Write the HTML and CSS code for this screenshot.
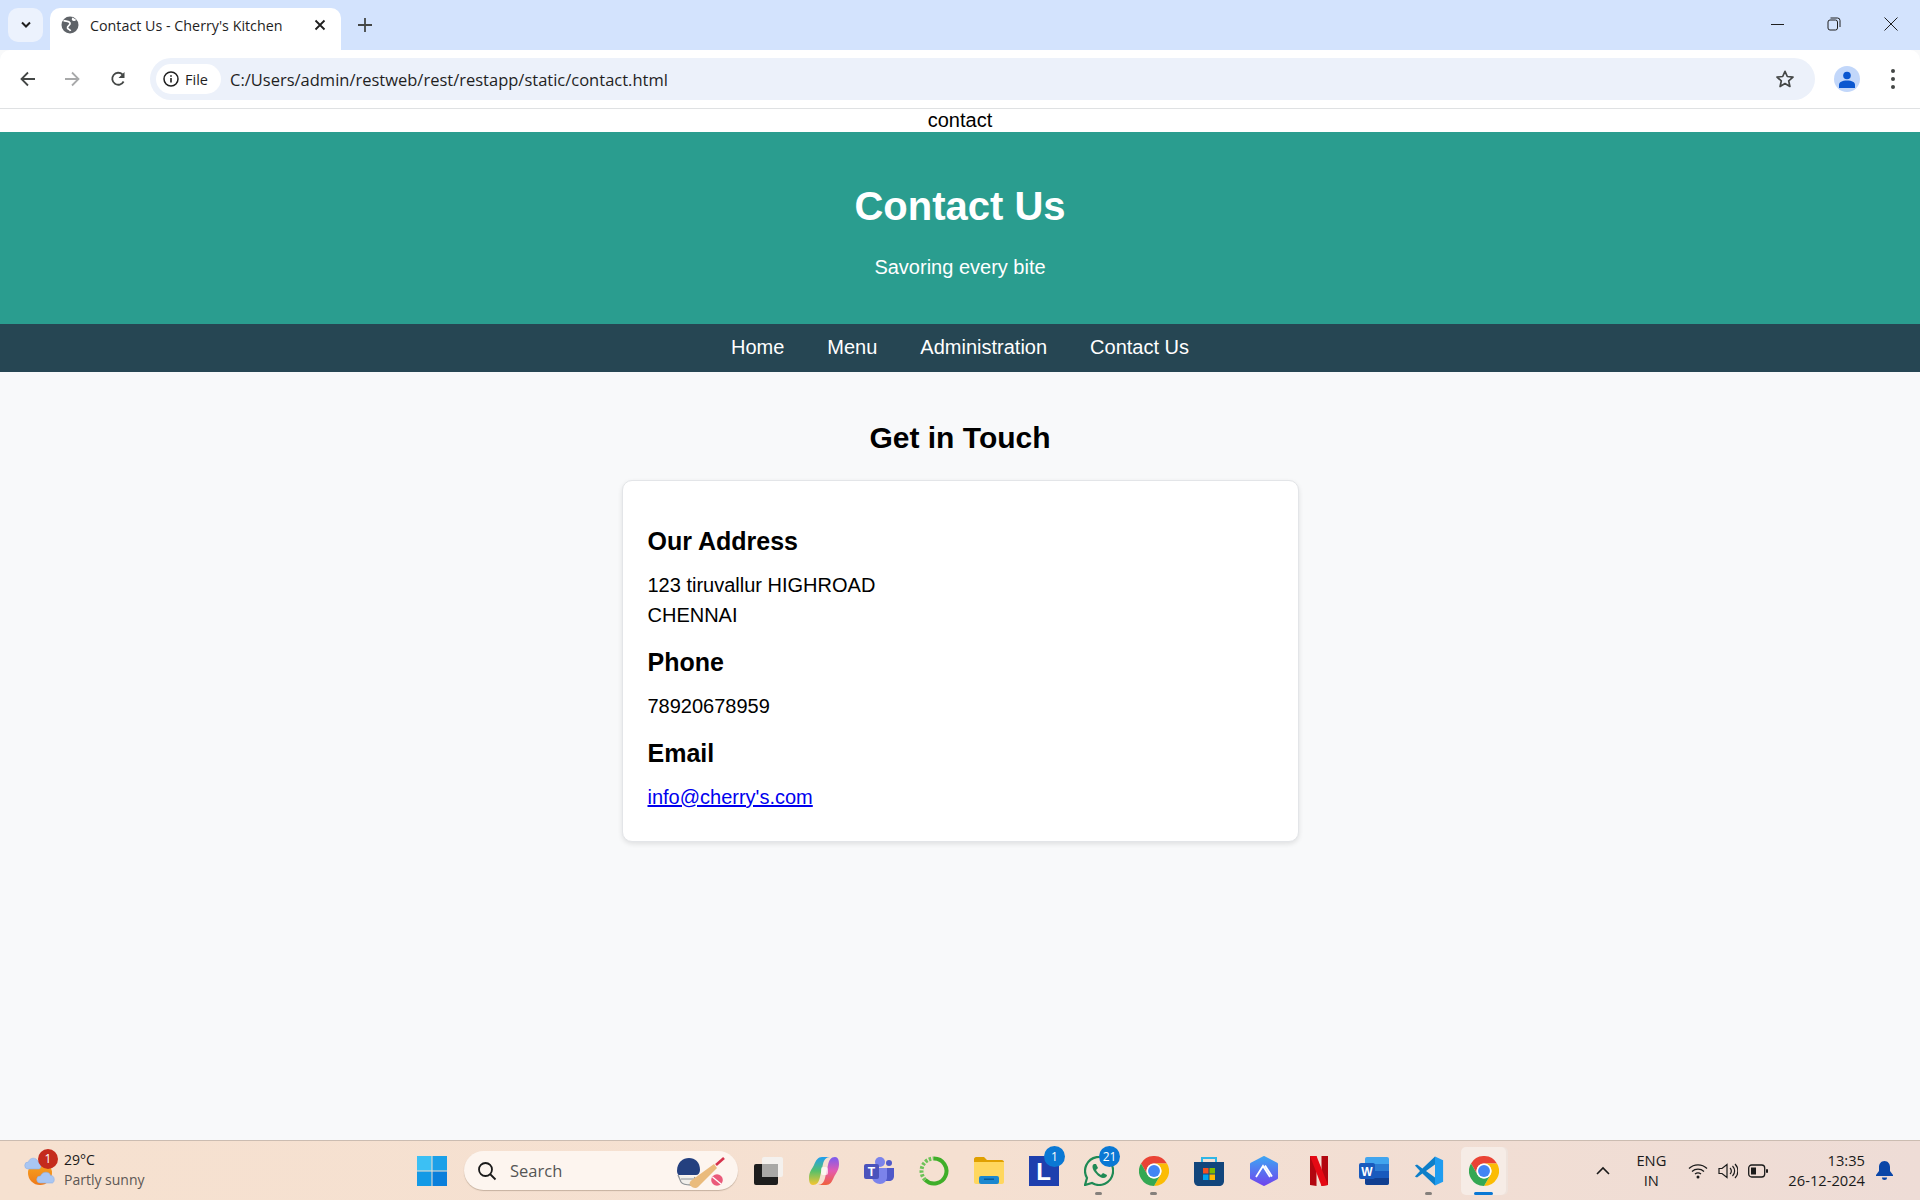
FILE: index.html
```html
<!DOCTYPE html>
<html lang="en">
<head>
    <meta charset="UTF-8">
    <title>Contact Us - Cherry's Kitchen</title>
    <link rel="stylesheet" href="styles.css">
</head>
<body>
    <svg class="defs" width="0" height="0">
        <defs>
            <linearGradient id="sun" x1="0" y1="0" x2="0" y2="1"><stop offset="0" stop-color="#f9a81e"/><stop offset="1" stop-color="#ee7a1a"/></linearGradient>
            <linearGradient id="cop-a" x1="0" y1="0" x2="0" y2="1"><stop offset="0" stop-color="#1f9ef0"/><stop offset=".5" stop-color="#57c06a"/><stop offset="1" stop-color="#f7c530"/></linearGradient>
            <linearGradient id="cop-b" x1="0" y1="0" x2="0" y2="1"><stop offset="0" stop-color="#7a5cf0"/><stop offset=".5" stop-color="#e35bb0"/><stop offset="1" stop-color="#f0603a"/></linearGradient>
            <linearGradient id="hex" x1="0" y1="0" x2="0" y2="1"><stop offset="0" stop-color="#3fa2f3"/><stop offset="1" stop-color="#6e48ee"/></linearGradient>
        </defs>
        <symbol id="chrome" viewBox="0 0 48 48">
            <path fill="#ea4335" d="M24 12H44.8A24 24 0 0 0 3.2 12L13.6 30A12 12 0 0 1 24 12Z"/>
            <path fill="#fbbc04" d="M44.8 12A24 24 0 0 1 24 48L34.4 30A12 12 0 0 0 24 12Z"/>
            <path fill="#34a853" d="M24 48A24 24 0 0 1 3.2 12L13.6 30A12 12 0 0 0 34.4 30Z"/>
            <circle cx="24" cy="24" r="12" fill="#fff"/>
            <circle cx="24" cy="24" r="9.5" fill="#4285f4"/>
        </symbol>
    </svg>

    <!-- browser frame -->
    <div class="tabstrip">
        <div class="tab-search">
            <svg width="12" height="8" viewBox="0 0 12 8"><path d="M2 1.5l4 4 4-4" fill="none" stroke="#1f1f1f" stroke-width="2"/></svg>
        </div>
        <div class="tab">
            <svg class="favicon" width="18" height="18" viewBox="0 0 18 18"><circle cx="9" cy="9" r="8.5" fill="#5f6368"/><path d="M2.500 4.500c2.500 1 5.500.5 6.500 2.500s-3 2.500-2.500 5c.3 1.500 2.500 1 3 3" fill="none" stroke="#fff" stroke-width="1.700"/><path d="M11.500 1.500c-1.500 2-.5 3.500 2 3.500l2-1z" fill="#fff"/></svg>
            <span class="tab-title">Contact Us - Cherry's Kitchen</span>
            <svg class="tab-close" width="12" height="12" viewBox="0 0 12 12"><path d="M1.5 1.5l9 9M10.5 1.5l-9 9" stroke="#1f1f1f" stroke-width="1.8"/></svg>
        </div>
        <svg class="new-tab" width="14" height="14" viewBox="0 0 14 14"><path d="M7 0v14M0 7h14" stroke="#444746" stroke-width="1.8"/></svg>
        <div class="window-btns">
            <svg width="14" height="14" viewBox="0 0 14 14"><path d="M1 7.500h13" stroke="#1f1f1f" stroke-width="1"/></svg>
            <svg width="14" height="14" viewBox="0 0 14 14"><rect x="1" y="3" width="9.500" height="10" rx="2" fill="none" stroke="#1f1f1f"/><path d="M3.500 1h7a2.500 2.500 0 0 1 2.500 2.500v6.500" fill="none" stroke="#1f1f1f"/></svg>
            <svg width="14" height="14" viewBox="0 0 14 14"><path d="M.5.5l13 13M13.500.5l-13 13" stroke="#1f1f1f" stroke-width="1"/></svg>
        </div>
    </div>
    <div class="toolbar">
        <div class="nav-btns">
            <svg width="16" height="16" viewBox="0 0 16 16"><path d="M15 8H2M8 1.500L1.500 8 8 14.500" fill="none" stroke="#444746" stroke-width="1.800"/></svg>
            <svg width="16" height="16" viewBox="0 0 16 16"><path d="M1 8h13M8 1.500L14.500 8 8 14.500" fill="none" stroke="#a8a9aa" stroke-width="1.800"/></svg>
            <svg width="16" height="16" viewBox="0 0 16 16"><path d="M13.600 10.500A6 6 0 1 1 12.500 3.500" fill="none" stroke="#444746" stroke-width="1.800"/><path d="M14.500 1v6h-6z" fill="#444746"/></svg>
        </div>
        <div class="omnibox">
            <div class="chip">
                <svg width="16" height="16" viewBox="0 0 16 16"><circle cx="8" cy="8" r="7" fill="none" stroke="#1f1f1f" stroke-width="1.500"/><path d="M8 7v4.500M8 4.200v1.600" stroke="#1f1f1f" stroke-width="1.600"/></svg>
                <span>File</span>
            </div>
            <span class="url">C:/Users/admin/restweb/rest/restapp/static/contact.html</span>
            <svg class="star" width="20" height="20" viewBox="0 0 20 20"><path d="M10 2.300l2.300 5.200 5.700.6-4.300 3.800 1.200 5.600-4.900-2.900-4.900 2.900 1.200-5.600L2 8.100l5.700-.6z" fill="none" stroke="#444746" stroke-width="1.700" stroke-linejoin="round"/></svg>
        </div>
        <div class="avatar">
            <svg width="16" height="17" viewBox="0 0 16 17"><circle cx="8" cy="4.500" r="3.800" fill="#0b57d0"/><path d="M0 17v-3c0-3 3-4.500 8-4.500s8 1.500 8 4.500v3z" fill="#0b57d0"/></svg>
        </div>
        <div class="dots"><i></i><i></i><i></i></div>
    </div>

    <!-- the page itself -->
    <div class="page">
        <div class="page-label">contact</div>
        <header class="site-header">
            <h1>Contact Us</h1>
            <p>Savoring every bite</p>
        </header>
        <nav class="site-nav">
            <a href="#">Home</a>
            <a href="#">Menu</a>
            <a href="#">Administration</a>
            <a href="#">Contact Us</a>
        </nav>
        <main class="content">
            <h2>Get in Touch</h2>
            <section class="card">
                <h3>Our Address</h3>
                <p>123 tiruvallur HIGHROAD<br>CHENNAI</p>
                <h3>Phone</h3>
                <p>78920678959</p>
                <h3>Email</h3>
                <p><a href="#">info@cherry's.com</a></p>
            </section>
        </main>
    </div>

    <!-- windows taskbar -->
    <footer class="taskbar">
        <div class="weather">
            <div class="weather-icon">
                <svg width="32" height="32" viewBox="0 0 32 32">
                    <circle cx="16" cy="18" r="12" fill="url(#sun)"/>
                    <path d="M4 14a3.500 3.500 0 0 1 .500-7c1-5 8-5 9.500-.5 3-.500 4.500 5 1.500 7.500z" fill="#a9c6f2" stroke="#8fb0e6" stroke-width=".6"/>
                    <path d="M16 28a3.500 3.500 0 0 1 .500-7c1.500-5 9-5 10-.5 4-.500 5 6 2 7.500z" fill="#a9c6f2" stroke="#8fb0e6" stroke-width=".6"/>
                </svg>
                <span class="weather-badge">1</span>
            </div>
            <div class="weather-text">
                <span class="temp">29°C</span>
                <span class="cond">Partly sunny</span>
            </div>
        </div>
        <div class="slot">
            <svg width="30" height="30" viewBox="0 0 30 30">
                <rect width="14.500" height="14.500" fill="#3cc0f4"/>
                <rect x="15.500" width="14.500" height="14.500" fill="#1ba0e8"/>
                <rect y="15.500" width="14.500" height="14.500" fill="#139ae6"/>
                <rect x="15.500" y="15.500" width="14.500" height="14.500" fill="#0a7fdb"/>
            </svg>
        </div>
        <div class="search">
            <svg width="20" height="20" viewBox="0 0 20 20"><circle cx="8.500" cy="8.500" r="6.500" fill="none" stroke="#1a1a1a" stroke-width="1.800"/><path d="M13 13l5.500 5.500" stroke="#1a1a1a" stroke-width="1.800"/></svg>
            <span>Search</span>
            <svg class="search-art" width="52" height="36" viewBox="0 0 52 36">
                <path d="M3 22l3 7c2 3 6 3 10 3l4-8" fill="#f1efeb" stroke="#8f9498" stroke-width="1.300"/>
                <path d="M4 21l15 0M6 26l12 0" stroke="#8f9498" stroke-width="1"/>
                <path d="M2 18C2 9 8 5 14 5s11 4 11 12c0 3-2 5-4 5l-17 0c-1 0-2-2-2-4z" fill="#24407f"/>
                <path d="M15 32c-1-2 0-4 2-5l22-16 3 4-19 19c-2 2-6 1-8-2z" fill="#eabb7c"/>
                <path d="M41 12l8-7" stroke="#d6324c" stroke-width="2.600"/>
                <circle cx="42" cy="27" r="5.800" fill="#ea5a7a"/>
                <path d="M37.500 24l8.500 7" stroke="#fff" stroke-width="1.300"/>
            </svg>
        </div>

        <div class="app-slots">
            <div class="slot">
                <svg width="30" height="28" viewBox="0 0 30 28"><rect y="7" width="24" height="21" rx="2" fill="#1d1d1d"/><rect x="8" width="21" height="20" rx="2" fill="#f4f1ee"/><rect x="8" y="7" width="16" height="13" fill="#a9a8a6"/></svg>
            </div>
            <div class="slot">
                <svg width="30" height="28" viewBox="0 0 30 28"><path d="M13 0H21C17 0 15 3 14 7L11 20C10 25 8 28 4 28 1 28 0 25 0 21 0 15 3 12 5 8 7 3 9 0 13 0Z" fill="url(#cop-a)"/><path d="M17 28H9C13 28 15 25 16 21L19 8C20 3 22 0 26 0 29 0 30 3 30 7 30 13 27 16 25 20 23 25 21 28 17 28Z" fill="url(#cop-b)"/><rect x="12" y="10" width="7" height="8" rx="2" fill="#fff" opacity=".7"/></svg>
            </div>
            <div class="slot">
                <svg width="30" height="27" viewBox="0 0 30 27"><circle cx="16" cy="5" r="5" fill="#7b83eb"/><circle cx="25" cy="6" r="3" fill="#5059c9"/><path d="M21 11h9v8c0 3-2 5-5 5h-4z" fill="#5059c9"/><path d="M8 11h15v9c0 4-3 7-7 7s-8-3-8-7z" fill="#7b83eb"/><rect y="7" width="15" height="15" rx="2" fill="#4b53bc"/><text x="7.500" y="19" class="svg-letter" font-size="12" text-anchor="middle">T</text></svg>
            </div>
            <div class="slot">
                <svg width="30" height="30" viewBox="0 0 30 30"><path d="M15 2.500A12.500 12.500 0 1 1 6.200 23.900" fill="none" stroke="#3fae29" stroke-width="4"/><path d="M6.200 23.900A12.500 12.500 0 0 1 15 2.500" fill="none" stroke="#6cc257" stroke-width="4" stroke-dasharray="2.500 1.500"/></svg>
            </div>
            <div class="slot">
                <svg width="30" height="27" viewBox="0 0 30 27"><path d="M0 2c0-1 1-2 2-2h8l3 3h15c1 0 2 1 2 2v4H0z" fill="#e0a000"/><path d="M0 5h30v20c0 1-1 2-2 2H2c-1 0-2-1-2-2z" fill="#ffd75e"/><rect x="5" y="19" width="20" height="8" rx="2" fill="#1b87cf"/><rect x="10" y="21.500" width="10" height="1.500" fill="#0b5a96"/></svg>
            </div>
            <div class="slot">
                <div class="app-l">L</div>
                <span class="app-badge">1</span>
            </div>
            <div class="slot running">
                <svg width="30" height="30" viewBox="0 0 30 30"><path d="M1 29l2-7A14 14 0 1 1 8 27z" fill="#f5e2d5" stroke="#1f8a55" stroke-width="2.200"/><path d="M10 8c-2 1-2 4 0 7s6 7 9 7 4-2 4-3l-4-2-2 2c-2-1-4-3-5-5l2-2-2-4z" fill="#1f8a55"/></svg>
                <span class="app-badge">21</span>
            </div>
            <div class="slot running">
                <svg width="30" height="30"><use href="#chrome"/></svg>
            </div>
            <div class="slot">
                <svg width="30" height="30" viewBox="0 0 30 30"><path d="M8 7V2h14v5" fill="none" stroke="#2fb6e6" stroke-width="2"/><path d="M0 6h30v19c0 3-2 5-5 5H5c-3 0-5-2-5-5z" fill="#12467c"/><rect x="9" y="12" width="5.500" height="5.500" fill="#f25022"/><rect x="15.500" y="12" width="5.500" height="5.500" fill="#7fba00"/><rect x="9" y="18.500" width="5.500" height="5.500" fill="#00a4ef"/><rect x="15.500" y="18.500" width="5.500" height="5.500" fill="#ffb900"/></svg>
            </div>
            <div class="slot">
                <svg width="28" height="30" viewBox="0 0 28 30"><path d="M14 1.500l12.500 6.500v14L14 28.500 1.500 22V8z" fill="url(#hex)" stroke="url(#hex)" stroke-width="3" stroke-linejoin="round"/><path d="M6 21l7-11 7 11M15 9.500l7 11" fill="none" stroke="#fff" stroke-width="1.800"/></svg>
            </div>
            <div class="slot">
                <svg width="18" height="30" viewBox="0 0 18 30"><path d="M0 0h6.500v30L0 29z" fill="#b20710"/><path d="M11.500 0H18v29l-6.500 1z" fill="#b20710"/><path d="M0 0h6.500L18 29l-6.500 1z" fill="#e50914"/></svg>
            </div>
            <div class="slot">
                <svg width="30" height="28" viewBox="0 0 30 28"><rect x="6" width="24" height="28" rx="2" fill="#41a5ee"/><rect x="6" y="7" width="24" height="7" fill="#2b7cd3"/><rect x="6" y="14" width="24" height="7" fill="#185abd"/><path d="M6 21h24v5c0 1-1 2-2 2H8c-1 0-2-1-2-2z" fill="#103f91"/><rect y="6" width="16" height="16" rx="2" fill="#185abd"/><text x="8" y="19" class="svg-letter" font-size="12" text-anchor="middle">W</text></svg>
            </div>
            <div class="slot running">
                <svg width="30" height="30" viewBox="0 0 100 100"><path fill-rule="evenodd" d="M70 2L28 42 10 28 3 32 20 50 3 68l7 4 18-14 42 40zM70 28L40 50l30 22z" fill="#0e7fc9"/><path d="M70 2l27 12v72L70 98z" fill="#1f9cf0"/></svg>
            </div>
            <div class="slot active">
                <svg width="30" height="30"><use href="#chrome"/></svg>
            </div>
        </div>

        <div class="tray">
            <svg width="14" height="9" viewBox="0 0 14 9"><path d="M1 8l6-6 6 6" fill="none" stroke="#1a1a1a" stroke-width="1.600"/></svg>
            <div class="lang"><span>ENG</span><span>IN</span></div>
            <div class="tray-icons">
                <svg width="20" height="16" viewBox="0 0 20 16"><path d="M1 5.500a13 13 0 0 1 18 0M4 8.500a9 9 0 0 1 12 0M7 11a5 5 0 0 1 6 0" fill="none" stroke="#1a1a1a" stroke-width="1.300"/><circle cx="10" cy="14" r="1.500" fill="#1a1a1a"/></svg>
                <svg width="20" height="16" viewBox="0 0 20 16"><path d="M1 5.500h3L9 1.500v13l-5-4H1z" fill="none" stroke="#1a1a1a" stroke-width="1.200"/><path d="M12 5a4 4 0 0 1 0 6M14.500 3a7 7 0 0 1 0 10M17 1a10 10 0 0 1 0 14" fill="none" stroke="#1a1a1a" stroke-width="1.200"/></svg>
                <svg width="20" height="14" viewBox="0 0 20 14"><rect x=".7" y="1" width="16" height="12" rx="3" fill="none" stroke="#1a1a1a" stroke-width="1.300"/><rect x="3" y="3.500" width="5" height="7" fill="#1a1a1a"/><rect x="18" y="5" width="2" height="4" rx="1" fill="#1a1a1a"/></svg>
            </div>
            <div class="clock"><span>13:35</span><span>26-12-2024</span></div>
            <svg width="17" height="19" viewBox="0 0 17 19"><path d="M8.500 0C5 0 3 3 3 6v4l-3 4v1h17v-1l-3-4V6c0-3-2-6-5.500-6z" fill="#0a46a8"/><path d="M6 16.500h5a2.500 2.500 0 0 1-5 0z" fill="#0a46a8"/></svg>
        </div>
    </footer>
</body>
</html>
```

FILE: styles.css
```css
* {
    box-sizing: border-box;
}
html, body {
    height: 100%;
}
body {
    margin: 0;
    display: flex;
    flex-direction: column;
    background-color: #f8f9fa;
    font-family: "Liberation Sans", Arial, sans-serif;
    font-size: 20px;
    color: #000;
    overflow: hidden;
}
.defs {
    position: absolute;
}

/* browser frame */
.tabstrip {
    height: 50px;
    flex: none;
    display: flex;
    align-items: flex-start;
    padding: 8px 0 0 8px;
    background-color: #d3e3fd;
    font-family: "Open Sans", sans-serif;
}
.tab-search {
    width: 35px;
    height: 34px;
    border-radius: 10px;
    background-color: #ecf2fd;
    display: flex;
    align-items: center;
    justify-content: center;
}
.tab {
    width: 291px;
    height: 42px;
    margin-left: 7px;
    padding: 0 15px 8px 11px;
    background-color: #fff;
    border-radius: 10px 10px 0 0;
    display: flex;
    align-items: center;
}
.tab-title {
    margin-left: 11px;
    flex: 1;
    font-size: 14.300px;
    color: #1f1f1f;
    white-space: nowrap;
}
.new-tab {
    margin: 10px 0 0 17px;
}
.window-btns {
    margin-left: auto;
    height: 34px;
    display: flex;
    align-items: center;
    gap: 43px;
    padding-right: 22px;
    margin-top: -1px;
}

.toolbar {
    height: 59px;
    flex: none;
    display: flex;
    align-items: center;
    background-color: #fff;
    border-bottom: 1px solid #dfe1e3;
    border-radius: 10px 10px 0 0;
    font-family: "Open Sans", sans-serif;
}
.nav-btns {
    width: 150px;
    padding-left: 20px;
    display: flex;
    gap: 28px;
}
.nav-btns svg:last-child {
    margin-left: 2px;
}
.omnibox {
    width: 1665px;
    height: 42px;
    border-radius: 21px;
    background-color: #ecf1fa;
    display: flex;
    align-items: center;
    padding: 0 20px 0 6px;
}
.chip {
    width: 65px;
    height: 30px;
    border-radius: 15px;
    background-color: #fff;
    display: flex;
    align-items: center;
    gap: 6px;
    padding-left: 7px;
    font-size: 14.500px;
    font-weight: 500;
    color: #1f1f1f;
}
.url {
    margin-left: 9px;
    flex: 1;
    font-size: 16.500px;
    color: #1f1f1f;
}
.avatar {
    width: 26px;
    height: 26px;
    margin-left: 19px;
    border-radius: 50%;
    background-color: #c2d7fa;
    display: flex;
    align-items: flex-end;
    justify-content: center;
    padding-bottom: 4px;
}
.dots {
    margin-left: 31px;
    display: flex;
    flex-direction: column;
    gap: 4px;
}
.dots i {
    display: block;
    width: 4px;
    height: 4px;
    border-radius: 50%;
    background-color: #444746;
}

/* page content */
.page {
    flex: 1;
    min-height: 0;
}
.page-label {
    background-color: #fff;
    text-align: center;
}
.site-header {
    padding: 25px 20px;
    background-color: #2a9d8f;
    color: #fff;
    text-align: center;
}
.site-header h1 {
    margin: 27px 0;
    font-size: 40px;
}
.site-header p {
    margin: 0 0 20px;
}
.site-nav {
    height: 48px;
    padding-bottom: 2px;
    background-color: #264653;
    display: flex;
    justify-content: center;
    align-items: center;
    gap: 43px;
}
.site-nav a {
    color: #fff;
    text-decoration: none;
}
.content {
    width: 677px;
    margin: 0 auto;
    padding-top: 24px;
}
.content h2 {
    margin: 25px 0;
    font-size: 30px;
    text-align: center;
}
.card {
    padding: 28px 25px 25px;
    background-color: #fff;
    border: 1px solid #e3e5e8;
    border-radius: 10px;
    box-shadow: 0 2px 5px rgba(0, 0, 0, 0.1);
}
.card h3 {
    margin: 17px 0 14px;
    font-size: 25px;
    line-height: 30px;
}
.card p {
    margin: 0 0 4px;
    line-height: 30px;
}

/* taskbar */
.taskbar {
    height: 60px;
    flex: none;
    display: flex;
    align-items: center;
    background: linear-gradient(90deg, #f6e1d0, #f5e0d1 50%, #eedcd6);
    border-top: 1px solid #cbbcb1;
    font-family: "Open Sans", sans-serif;
    color: #1a1a1a;
}
.weather {
    width: 404px;
    display: flex;
    align-items: center;
    padding-left: 24px;
}
.weather-icon {
    position: relative;
    width: 32px;
    height: 32px;
}
.weather-badge {
    position: absolute;
    top: -6px;
    left: 14px;
    width: 20px;
    height: 20px;
    border-radius: 50%;
    background-color: #c42b1c;
    color: #fff;
    font-size: 12px;
    line-height: 20px;
    text-align: center;
}
.weather-text {
    margin-left: 8px;
    padding-bottom: 2px;
    display: flex;
    flex-direction: column;
    font-size: 14px;
    line-height: 20px;
}
.cond {
    color: #5d5754;
}
.app-slots {
    margin-left: 3px;
    display: flex;
}
.slot {
    position: relative;
    width: 55px;
    height: 48px;
    flex: none;
    display: flex;
    align-items: center;
    justify-content: center;
}
.slot.running::after,
.slot.active::after {
    content: "";
    position: absolute;
    bottom: 0;
    left: 24px;
    width: 7px;
    height: 3px;
    border-radius: 2px;
    background-color: #85807c;
}
.slot.active::before {
    content: "";
    position: absolute;
    inset: 0 5px;
    background-color: #f6ece6;
    border-radius: 5px;
    box-shadow: 2px 0 0 #efe3dc;
}
.slot.active svg {
    position: relative;
}
.slot.active::after {
    left: 18px;
    width: 19px;
    background-color: #0a78d4;
}
.search {
    width: 274px;
    height: 39px;
    margin-left: 5px;
    flex: none;
    border-radius: 20px;
    background-color: #fdf5ef;
    box-shadow: 0 1px 1px rgba(90, 70, 50, 0.3);
    display: flex;
    align-items: center;
    padding-left: 13px;
    font-size: 16.500px;
    color: #555;
}
.search span {
    margin-left: 13px;
    flex: 1;
}
.search-art {
    margin-right: 11px;
}
.svg-letter {
    fill: #fff;
    font-family: "Liberation Sans", sans-serif;
    font-weight: bold;
}
.app-l {
    width: 30px;
    height: 30px;
    background-color: #1e3fae;
    color: #fff;
    font-family: "Liberation Sans", sans-serif;
    font-weight: bold;
    font-size: 24px;
    line-height: 32px;
    text-align: center;
}
.app-badge {
    position: absolute;
    top: -1px;
    right: 6px;
    min-width: 21px;
    height: 21px;
    border-radius: 50%;
    background-color: #0a78d4;
    color: #fff;
    font-size: 12px;
    line-height: 21px;
    text-align: center;
}
.tray {
    margin-left: auto;
    padding-right: 27px;
    display: flex;
    align-items: center;
    font-size: 14.700px;
    line-height: 20px;
}
.lang {
    margin-left: 21px;
    width: 40px;
    padding-bottom: 1px;
    display: flex;
    flex-direction: column;
    align-items: center;
}
.tray-icons {
    margin-left: 17px;
    display: flex;
    align-items: center;
    gap: 10px;
}
.clock {
    margin-left: 20px;
    margin-right: 11px;
    padding-bottom: 2px;
    display: flex;
    flex-direction: column;
    align-items: flex-end;
}
```
